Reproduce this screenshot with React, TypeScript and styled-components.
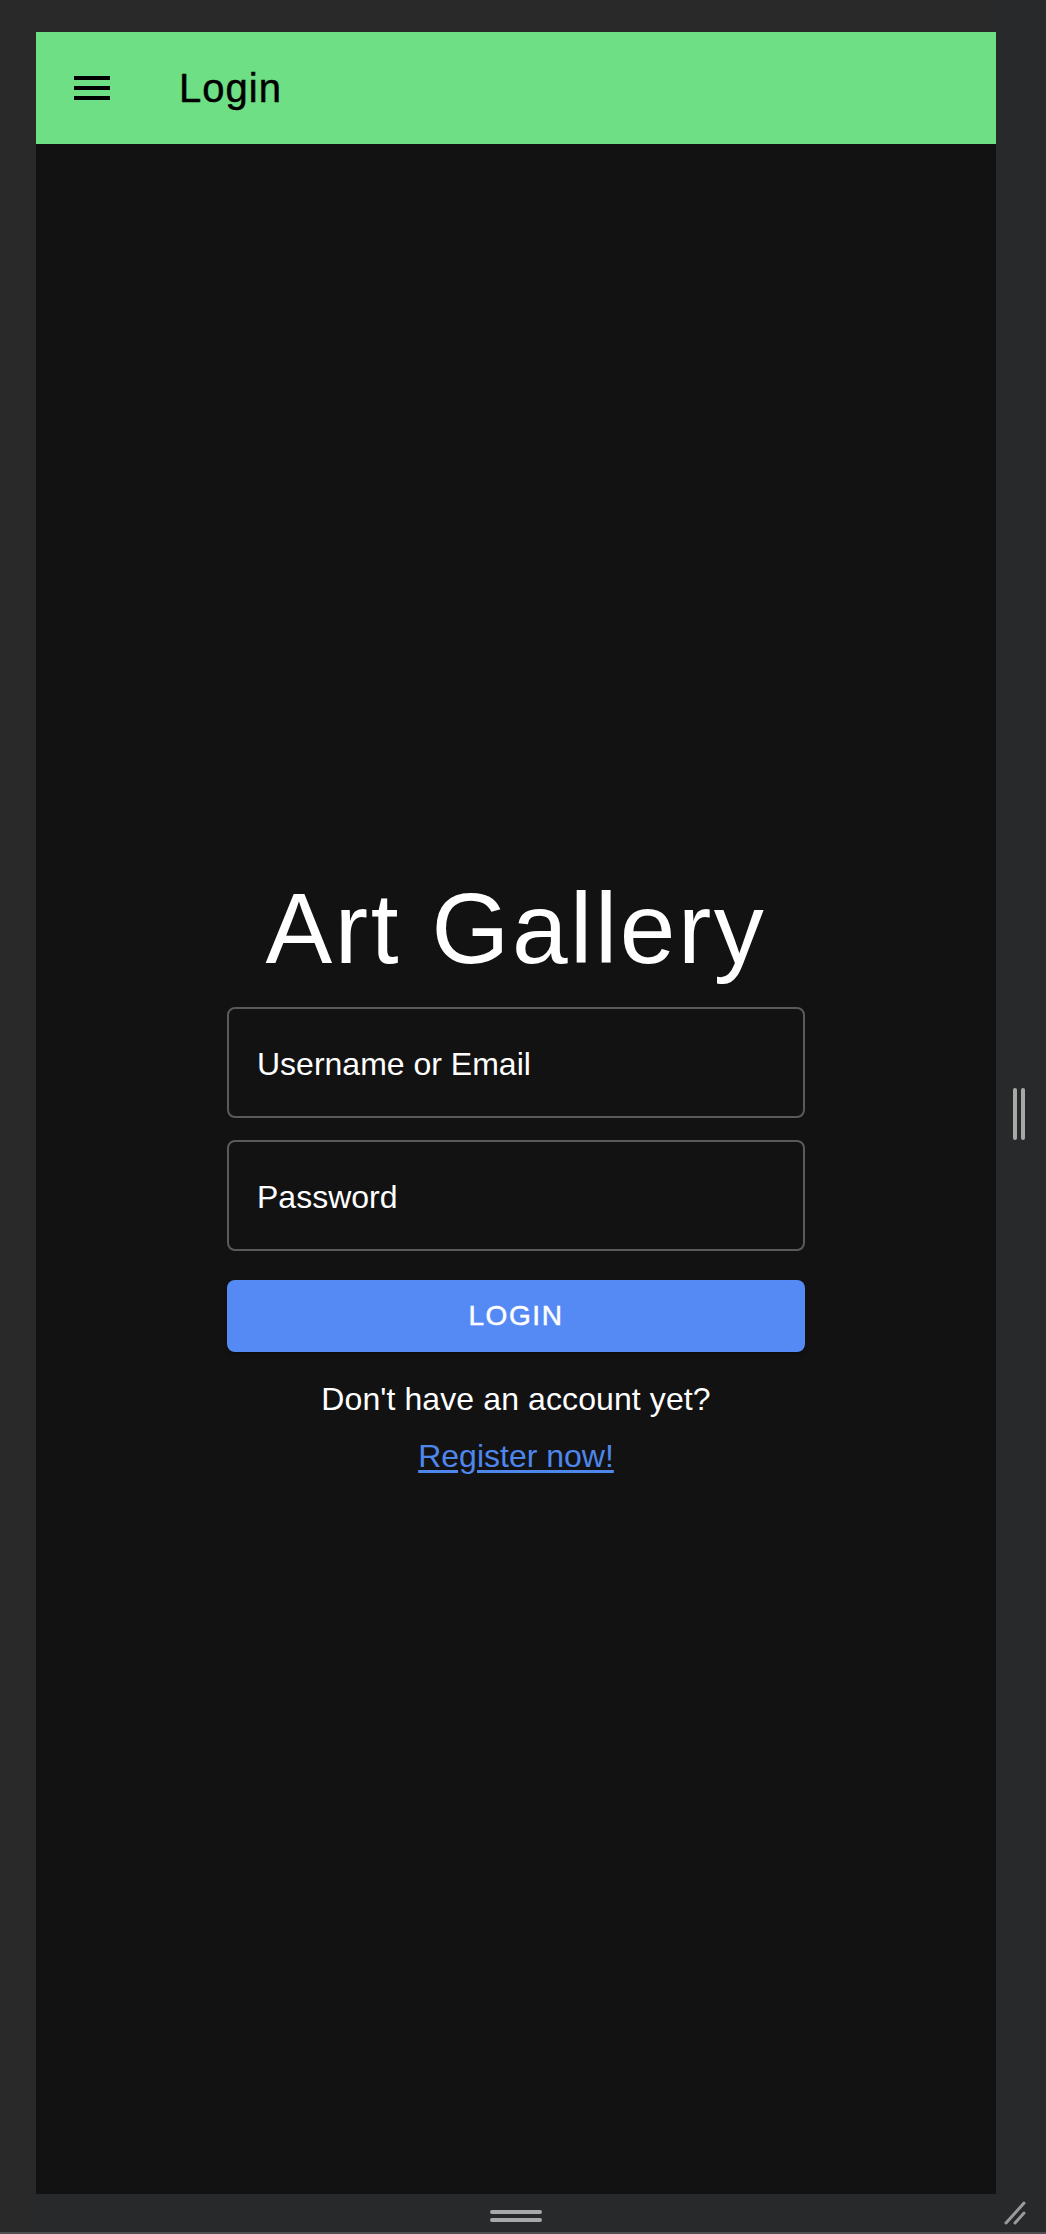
import React from "react";
import styled, { createGlobalStyle } from "styled-components";

const GlobalStyle = createGlobalStyle`
  html, body {
    margin: 0;
    padding: 0;
    background: #292929;
  }
  body {
    font-family: "Liberation Sans", Arial, Helvetica, sans-serif;
    -webkit-font-smoothing: antialiased;
  }
  * { box-sizing: border-box; }
`;

const Page = styled.div`
  width: 1046px;
  height: 2234px;
  display: flex;
  flex-direction: column;
  background: #292929;
`;

const BodyRow = styled.div`
  flex: 1;
  display: flex;
  min-height: 0;
`;

const BottomLine = styled.div`
  height: 2px;
  background: #4e4e50;
`;

const LeftRail = styled.div`
  width: 36px;
  background: #292929;
`;

const CenterColumn = styled.div`
  width: 960px;
  display: flex;
  flex-direction: column;
`;

const TopGap = styled.div`
  height: 32px;
  background: #292929;
`;

const Screen = styled.div`
  flex: 1;
  display: flex;
  flex-direction: column;
  background: #121212;
`;

const BottomBar = styled.div`
  height: 38px;
  background: #28292b;
  display: flex;
  align-items: center;
  justify-content: center;
  padding-top: 6px;
`;

const HorizontalGrip = styled.div`
  width: 52px;
  display: flex;
  flex-direction: column;
  gap: 4px;
`;

const GripBarH = styled.div`
  height: 4px;
  border-radius: 2px;
  background: #a8a8a8;
`;

const RightRail = styled.div`
  position: relative;
  width: 50px;
  background: #28292b;
  display: flex;
  align-items: center;
  justify-content: center;
  padding-right: 4px;
`;

const VerticalGrip = styled.div`
  height: 52px;
  display: flex;
  gap: 4px;
  margin-top: -4px;
`;

const GripBarV = styled.div`
  width: 4px;
  border-radius: 2px;
  background: #a8a8a8;
`;

const ResizeGrip = styled.svg`
  position: absolute;
  right: 19px;
  bottom: 6px;
`;

const AppBar = styled.header`
  height: 112px;
  background: #6edf85;
  display: flex;
  align-items: center;
  padding: 0 32px;
  gap: 63px;
  flex-shrink: 0;
`;

const MenuButton = styled.button`
  width: 48px;
  height: 48px;
  padding: 0;
  border: none;
  background: transparent;
  display: flex;
  align-items: center;
  justify-content: center;
  color: #000;
`;

const BarTitle = styled.h1`
  margin: 0;
  font-size: 40px;
  line-height: 48px;
  font-weight: 400;
  letter-spacing: 1px;
  color: #000;
  -webkit-text-stroke: 0.5px #000;
`;

const Main = styled.main`
  display: flex;
  flex-direction: column;
  align-items: center;
  padding-top: 726px;
`;

const Heading = styled.h2`
  margin: 0;
  font-size: 100px;
  line-height: 116px;
  font-weight: 400;
  letter-spacing: 2.6px;
  color: #ffffff;
`;

const Form = styled.form`
  width: 578px;
  display: flex;
  flex-direction: column;
  margin-top: 21px;
`;

const Field = styled.div<{ $gap?: number }>`
  height: 111px;
  border: 2px solid #5a5a5a;
  border-radius: 8px;
  display: flex;
  align-items: center;
  padding: 2px 28px 0;
  margin-top: ${(p) => p.$gap ?? 0}px;
`;

const FieldLabel = styled.span`
  font-size: 32px;
  line-height: 36px;
  color: #ffffff;
`;

const SubmitButton = styled.button`
  margin-top: 29px;
  height: 72px;
  border: none;
  border-radius: 8px;
  background: #558af5;
  color: #ffffff;
  font-family: "Liberation Sans", Arial, Helvetica, sans-serif;
  font-size: 28px;
  font-weight: 400;
  letter-spacing: 1.6px;
  text-transform: uppercase;
  -webkit-text-stroke: 0.5px #ffffff;
  box-shadow: 0 3px 2px -2px rgba(0, 0, 0, 0.2), 0 2px 4px 0 rgba(0, 0, 0, 0.14);
`;

const Prompt = styled.p`
  margin: 23px 0 0;
  font-size: 32px;
  line-height: 48px;
  letter-spacing: 0.1px;
  color: #ffffff;
  text-align: center;
`;

const RegisterLink = styled.a`
  margin-top: 9px;
  font-size: 32px;
  line-height: 48px;
  color: #4f86ec;
  text-decoration: underline;
  text-underline-offset: 3px;
  text-decoration-thickness: 3px;
`;

const MenuIcon = () => (
  <svg width="48" height="48" viewBox="0 0 24 24" fill="currentColor">
    <path d="M3 18h18v-2H3v2zm0-5h18v-2H3v2zm0-7v2h18V6H3z" />
  </svg>
);

export default function App() {
  return (
    <>
      <GlobalStyle />
      <Page>
        <BodyRow>
          <LeftRail />
          <CenterColumn>
            <TopGap />
            <Screen>
              <AppBar>
                <MenuButton aria-label="menu">
                  <MenuIcon />
                </MenuButton>
                <BarTitle>Login</BarTitle>
              </AppBar>
              <Main>
                <Heading>Art Gallery</Heading>
                <Form onSubmit={(e) => e.preventDefault()}>
                  <Field>
                    <FieldLabel>Username or Email</FieldLabel>
                  </Field>
                  <Field $gap={22}>
                    <FieldLabel>Password</FieldLabel>
                  </Field>
                  <SubmitButton type="submit">Login</SubmitButton>
                </Form>
                <Prompt>Don't have an account yet?</Prompt>
                <RegisterLink href="#">Register now!</RegisterLink>
              </Main>
            </Screen>
            <BottomBar>
              <HorizontalGrip>
                <GripBarH />
                <GripBarH />
              </HorizontalGrip>
            </BottomBar>
          </CenterColumn>
          <RightRail>
            <VerticalGrip>
              <GripBarV />
              <GripBarV />
            </VerticalGrip>
            <ResizeGrip width="24" height="26" viewBox="0 0 24 26">
              <g stroke="#9a9a9a" strokeWidth="3" strokeLinecap="round">
                <line x1="3" y1="23" x2="21" y2="3" />
                <line x1="12" y1="23" x2="21" y2="13" />
              </g>
            </ResizeGrip>
          </RightRail>
        </BodyRow>
        <BottomLine />
      </Page>
    </>
  );
}
